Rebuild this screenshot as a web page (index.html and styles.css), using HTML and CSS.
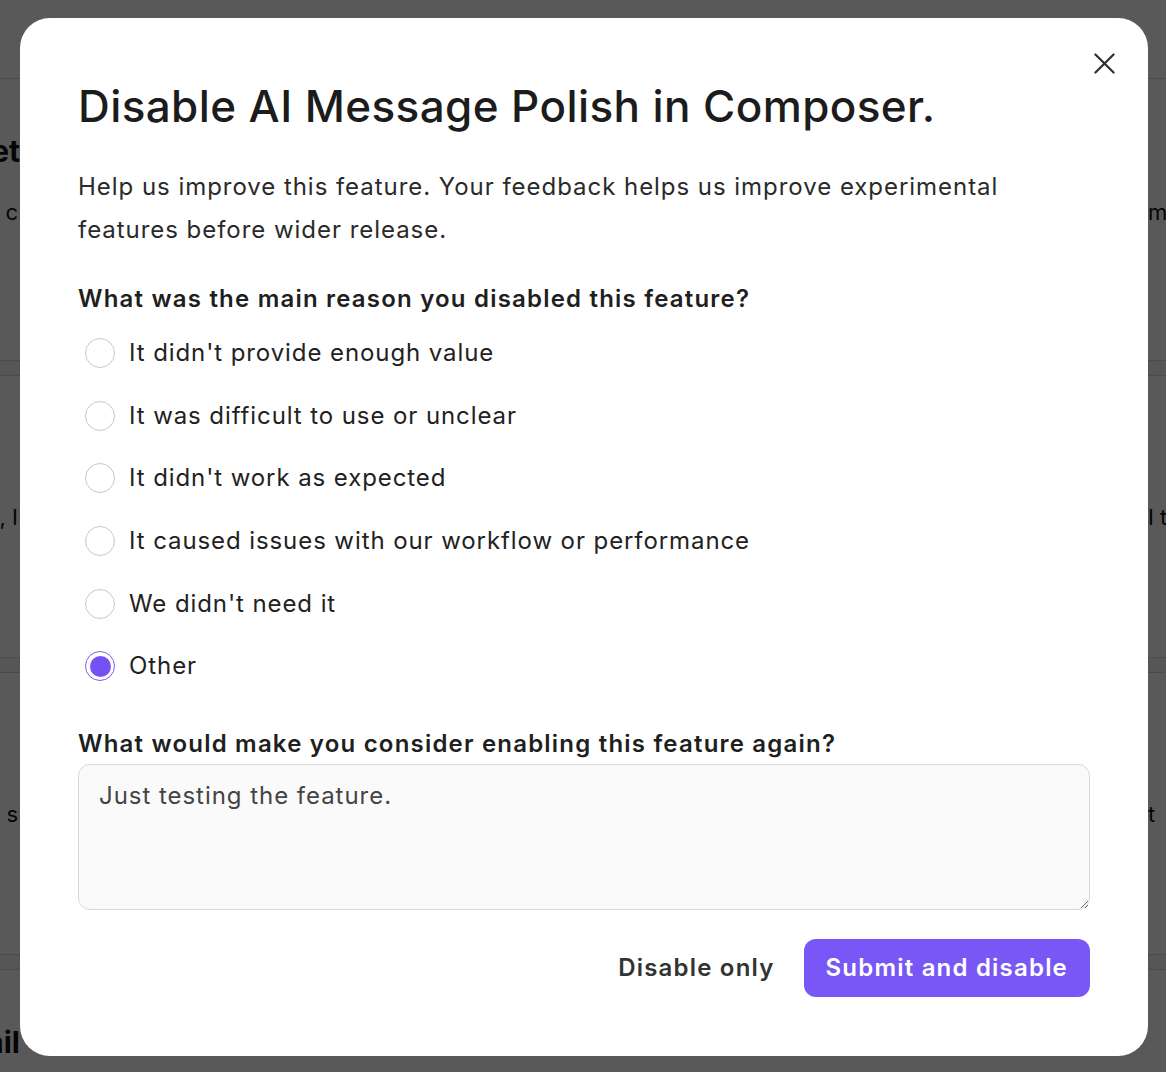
FILE: index.html
```html
<!DOCTYPE html>
<html lang="en">
<head>
<meta charset="utf-8">
<title>Disable AI Message Polish</title>
<link rel="stylesheet" href="styles.css">
</head>
<body>
<div class="page">
  <div class="page-header"></div>
  <div class="block block-first">
    <div class="row row-title"><span class="edge-l bold">Budget</span><span class="edge-r"></span></div>
    <div class="row row-desc"><span class="edge-l">c</span><span class="edge-r">m</span></div>
  </div>
  <div class="sep"></div>
  <div class="block">
    <div class="row row-mid"><span class="edge-l">Yes, I</span><span class="edge-r">I t</span></div>
  </div>
  <div class="sep"></div>
  <div class="block">
    <div class="row row-mid"><span class="edge-l">s</span><span class="edge-r">t</span></div>
  </div>
  <div class="sep"></div>
  <div class="block block-last">
    <div class="row row-title"><span class="edge-l bold">Email</span><span class="edge-r"></span></div>
  </div>
</div>
<div class="overlay"></div>

<div class="modal" role="dialog" aria-labelledby="modal-title">
  <button class="close" aria-label="Close">
    <svg width="22" height="22" viewBox="0 0 22 22"><path d="M1.5 1.5 L20.5 20.5 M20.5 1.5 L1.5 20.5" stroke="#2f2f2f" stroke-width="2.3" stroke-linecap="round" fill="none"/></svg>
  </button>
  <h1 id="modal-title" class="title">Disable AI Message Polish in Composer.</h1>
  <p class="intro">Help us improve this feature. Your feedback helps us improve experimental features before wider release.</p>

  <div class="question">What was the main reason you disabled this feature?</div>
  <ul class="options">
    <li class="option"><span class="radio"></span><span class="opt-label">It didn't provide enough value</span></li>
    <li class="option"><span class="radio"></span><span class="opt-label">It was difficult to use or unclear</span></li>
    <li class="option"><span class="radio"></span><span class="opt-label">It didn't work as expected</span></li>
    <li class="option"><span class="radio"></span><span class="opt-label">It caused issues with our workflow or performance</span></li>
    <li class="option"><span class="radio"></span><span class="opt-label">We didn't need it</span></li>
    <li class="option"><span class="radio checked"></span><span class="opt-label">Other</span></li>
  </ul>

  <div class="question q2">What would make you consider enabling this feature again?</div>
  <textarea class="feedback">Just testing the feature.</textarea>

  <div class="actions">
    <button class="btn btn-plain">Disable only</button>
    <button class="btn btn-primary">Submit and disable</button>
  </div>
</div>
</body>
</html>
```

FILE: styles.css
```css
* { box-sizing: border-box; }

html, body {
  margin: 0;
  padding: 0;
  height: 100%;
}

body {
  font-family: Inter, "Noto Sans", "Liberation Sans", sans-serif;
  background: #e4e4e4;
  overflow: hidden;
}

/* ---------- background page ---------- */
.page {
  background: #ffffff;
  height: 1072px;
  display: flex;
  flex-direction: column;
  color: #111;
}

.page-header {
  height: 79px;
  border-bottom: 1px solid #d6d6d6;
  flex: none;
}

.block {
  height: 281px;
  flex: none;
  display: flex;
  flex-direction: column;
}

.block-first { padding-top: 52px; gap: 26px; }
.block:not(.block-first):not(.block-last) { justify-content: center; }
.block-last { height: auto; flex: 1; padding-top: 52px; }

.sep {
  height: 16px;
  flex: none;
  border-top: 1px solid #d6d6d6;
  border-bottom: 1px solid #d6d6d6;
  background: #f6f6f6;
}

.row {
  display: flex;
  justify-content: space-between;
  font-size: 22px;
  line-height: 30px;
}

.row-title { font-size: 30px; font-weight: 700; line-height: 40px; }

.edge-l, .edge-r {
  width: 20px;
  overflow: hidden;
  white-space: nowrap;
  display: flex;
}
.edge-l { justify-content: flex-end; padding-right: 2px; }
.edge-r { justify-content: flex-start; width: 18px; }
.row-title .edge-l { padding-right: 0; }
.bold { font-weight: 700; }

.overlay {
  position: fixed;
  inset: 0;
  background: rgba(0, 0, 0, 0.65);
}

/* ---------- modal ---------- */
.modal {
  position: fixed;
  left: 20px;
  top: 18px;
  width: 1128px;
  height: 1038px;
  background: #ffffff;
  border-radius: 30px;
  padding: 62px 58px 0 58px;
  display: flex;
  flex-direction: column;
  color: #1f1f1f;
}

.close {
  position: absolute;
  top: 27px;
  right: 26px;
  width: 36px;
  height: 36px;
  border: 0;
  background: transparent;
  padding: 0;
  display: flex;
  align-items: center;
  justify-content: center;
  cursor: pointer;
}

.close svg { width: 21px; height: 21px; }

.title {
  margin: 0;
  font-size: 44px;
  line-height: 52px;
  font-weight: 500;
  letter-spacing: 0.4px;
  color: #1c1c1c;
}

.intro {
  margin: 33px 0 0 0;
  font-size: 24px;
  line-height: 43px;
  letter-spacing: 0.04em;
  color: #2a2a2a;
}

.question {
  margin-top: 32px;
  font-size: 24px;
  line-height: 32px;
  font-weight: 600;
  letter-spacing: 0.05em;
  color: #1f1f1f;
}

.q2 { margin-top: 30px; }

.options {
  list-style: none;
  margin: 7px 0 0 0;
  padding: 0;
  display: flex;
  flex-direction: column;
}

.option {
  height: 62.6px;
  display: flex;
  align-items: center;
  gap: 14px;
  padding-left: 7px;
}

.radio {
  width: 30px;
  height: 30px;
  border-radius: 50%;
  border: 1px solid #c8c8c8;
  background: #fff;
  flex: none;
  display: flex;
  align-items: center;
  justify-content: center;
}

.radio.checked {
  border: 1.5px solid #7a5af8;
}

.radio.checked::after {
  content: "";
  width: 21px;
  height: 21px;
  border-radius: 50%;
  background: #7351f5;
}

.opt-label {
  font-size: 24px;
  line-height: 32px;
  letter-spacing: 0.038em;
  color: #222;
}

.feedback {
  margin-top: 4px;
  width: 1012px;
  height: 146px;
  border: 1px solid #d9d9d9;
  border-radius: 12px;
  background: #fafafa;
  padding: 15px 20px 13px;
  font-family: Inter, "Noto Sans", "Liberation Sans", sans-serif;
  font-size: 24px;
  line-height: 32px;
  letter-spacing: 0.04em;
  color: #444;
  resize: vertical;
  outline: none;
}

.actions {
  margin-top: 29px;
  display: flex;
  justify-content: flex-end;
  align-items: center;
  gap: 7px;
}

.btn {
  font-family: Inter, "Noto Sans", "Liberation Sans", sans-serif;
  font-size: 24px;
  font-weight: 600;
  letter-spacing: 0.05em;
  height: 58px;
  border: 0;
  border-radius: 12px;
  padding: 0 22px;
  cursor: pointer;
}

.btn-plain {
  background: transparent;
  color: #333;
}

.btn-primary {
  background: #7857f6;
  color: #ffffff;
}
```
